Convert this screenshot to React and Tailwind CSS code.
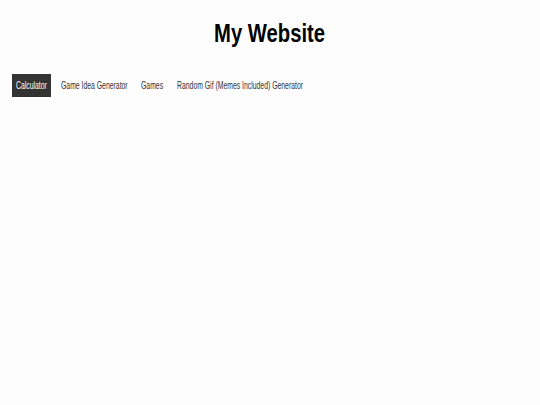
import React from "react";

// Arial Narrow isn't installed, so Liberation Sans is squeezed horizontally
// and each nav label gets the width it has in the original.
const links = [
  { label: "Calculator", w: "w-[31px]" },
  { label: "Game Idea Generator", w: "w-[66px]" },
  { label: "Games", w: "w-[22px]" },
  { label: "Random Gif (Memes Included) Generator", w: "w-[125px]" },
];

export default function App() {
  return (
    <div
      className="min-h-[405px] bg-[#fdfdfd] text-[#333]"
      style={{ fontFamily: '"Liberation Sans", Arial, sans-serif' }}
    >
      {/* Header */}
      <div className="flex justify-center pt-[18px]">
        <h1 className="origin-center scale-x-[0.81] whitespace-nowrap text-[25px] font-bold leading-[30px] text-black">
          My Website
        </h1>
      </div>

      {/* Nav bar */}
      <nav className="mt-[26px] flex items-center gap-[6px] px-[12px]">
        {links.map((l, i) => (
          <a
            key={l.label}
            href="#"
            className={`flex h-[23px] items-center px-[4px] text-[10px] ${i === 0 ? "bg-[#333] text-white" : "text-[#333]"}`}
          >
            <span className={`${l.w} block`}>
              <span className="inline-block origin-left scale-x-[0.685] whitespace-nowrap">{l.label}</span>
            </span>
          </a>
        ))}
      </nav>
    </div>
  );
}
